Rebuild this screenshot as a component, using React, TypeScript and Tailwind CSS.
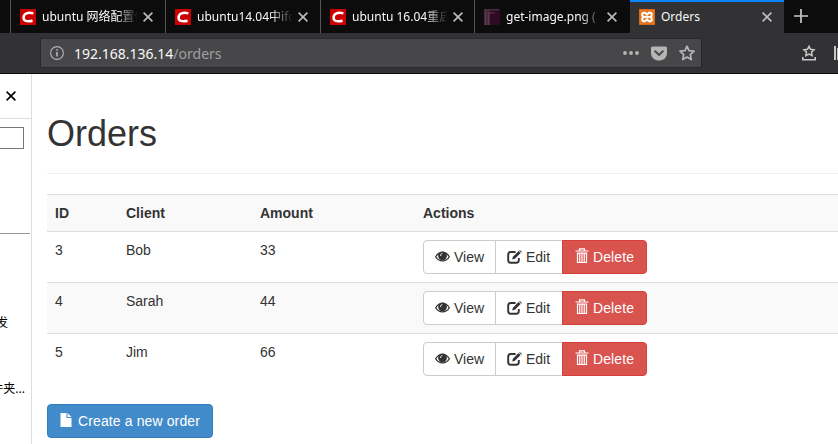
import type { ReactNode } from "react";

const uiFont = "font-['Noto_Sans','Noto_Sans_CJK_SC',sans-serif]";

function CloseIcon({ className = "text-[#bdbdbe]" }: { className?: string }) {
  return (
    <svg className={`h-[10px] w-[10px] shrink-0 ${className}`} viewBox="0 0 10 10" fill="none" stroke="currentColor" strokeWidth="1.6">
      <path d="M.6.6l8.8 8.8M9.4.6L.6 9.4" />
    </svg>
  );
}

function CsdnIcon() {
  return (
    <svg className="h-4 w-4 shrink-0" viewBox="0 0 16 16">
      <rect width="16" height="16" fill="#cb0000" />
      <path d="M13.4 4.4C7.800 3 3.900 4.500 3.600 8.300c-.3 3.500 3.200 4.700 9 3.400" fill="none" stroke="#fff" strokeWidth="2.500" />
    </svg>
  );
}

function ThumbIcon() {
  return (
    <svg className="h-4 w-4 shrink-0" viewBox="0 0 16 16">
      <rect width="16" height="16" fill="#300924" />
      <path d="M0 0h15v1.500H0z" fill="#46303f" />
      <path d="M0 1h6v15H0z" fill="#4b2740" />
      <path d="M1.500 3v13M4.500 3v13M6 4h5" stroke="#5c3a50" />
    </svg>
  );
}

function XamppIcon() {
  return (
    <svg className="h-4 w-4 shrink-0" viewBox="0 0 16 16">
      <rect width="16" height="16" rx="1.2" fill="#e87722" />
      <rect x=".5" y=".5" width="15" height="15" rx="1" fill="none" stroke="#d96a16" />
      <path d="M5 3.800h1L8 5.600l2-1.800h1c2.400 0 2.400 3.200.3 4.200 2.100 1 2.100 4.200-.3 4.200h-1L8 10.400l-2 1.800H5C2.600 12.200 2.600 9 4.700 8 2.600 7 2.600 3.800 5 3.800z" fill="none" stroke="#fff" strokeWidth="2" />
      <path d="M5.500 8h5" stroke="#fff" strokeWidth="1.900" />
    </svg>
  );
}

function Tab({ icon, title, width = "w-[155px]" }: { icon: ReactNode; title: string; width?: string }) {
  return (
    <div className={`flex h-[33px] shrink-0 items-center border-l border-[#555557] pl-[9px] ${width}`}>
      {icon}
      <span className="ml-[6px] w-[95px] shrink-0 overflow-hidden whitespace-nowrap text-[12px] leading-5 text-[#f9f9fa] [mask-image:linear-gradient(to_right,black_74px,transparent_96px)]">
        {title}
      </span>
      <span className="ml-[6px] flex">
        <CloseIcon />
      </span>
    </div>
  );
}

function EyeIcon() {
  return (
    <svg className="h-[14px] w-[15px] shrink-0" viewBox="0 0 15 14">
      <path d="M.7 6.800C3.800 1 11.200 1 14.300 6.800 11.200 12.300 3.800 12.300.7 6.800z" fill="none" stroke="currentColor" strokeWidth="1.300" />
      <circle cx="7.500" cy="5.800" r="4.400" fill="currentColor" />
      <path d="M5.700 6c-.3-1.300.4-2.300 1.600-2.500" fill="none" stroke="#fff" strokeWidth="1" />
    </svg>
  );
}

function EditIcon() {
  return (
    <svg className="h-[14px] w-[15px] shrink-0" viewBox="0 0 15 14">
      <path d="M8.600 2H3.800Q1.200 2 1.200 4.600v5.600q0 2.500 2.600 2.500h5.400q2.600 0 2.600-2.500V8" fill="none" stroke="currentColor" strokeWidth="1.900" />
      <path d="M5.200 9.600l.7-2.800 5.600-5.700 2.100 2-5.700 5.700z" fill="currentColor" />
      <path d="M12.200.5l.7-.5 2 2-.6.700z" fill="currentColor" />
    </svg>
  );
}

function TrashIcon() {
  return (
    <svg className="h-[16px] w-[14px] shrink-0" viewBox="0 0 14 16" fill="none" stroke="currentColor">
      <path d="M.5 3h13M4.500 2.500V.9h5v1.600" strokeWidth="1.200" />
      <path d="M1.900 5.100h10.200M2.500 5v9.500h9V5M4.750 5v9M7 5v9M9.250 5v9" strokeWidth="1.200" />
    </svg>
  );
}

function FileIcon() {
  return (
    <svg className="h-[14px] w-[12px] shrink-0" viewBox="0 0 12 14" fill="currentColor">
      <path d="M.5 0h6v5h5v9H.5zM7.500 0l4 4h-4z" />
    </svg>
  );
}

function Actions() {
  return (
    <div className="flex h-[34px] w-[224px] leading-5">
      <button className="flex w-[73px] items-center gap-[4px] rounded-l border border-[#ccc] bg-white pl-[11px] text-[#333]">
        <EyeIcon />
        View
      </button>
      <button className="-ml-px flex w-[68px] items-center gap-[4px] border border-[#ccc] bg-white pl-[11px] text-[#333]">
        <EditIcon />
        Edit
      </button>
      <button className="-ml-px flex w-[85px] items-center gap-[4px] rounded-r border border-[#d43f3a] bg-[#d9534f] pl-[12px] tracking-[0.1px] text-white">
        <span className="-mt-[2px]">
          <TrashIcon />
        </span>
        Delete
      </button>
    </div>
  );
}

const orders = [
  { id: 3, client: "Bob", amount: 33 },
  { id: 4, client: "Sarah", amount: 44 },
  { id: 5, client: "Jim", amount: 66 },
];

function BrowserChrome() {
  return (
    <header className={`h-[74px] border-b border-[#0c0c0d] bg-[#323234] ${uiFont}`}>
      <div className="flex h-[33px] bg-[#0c0c0d] pl-[10px]">
        <Tab icon={<CsdnIcon />} title="ubuntu 网络配置信" />
        <Tab icon={<CsdnIcon />} title="ubuntu14.04中ifc" />
        <Tab icon={<CsdnIcon />} title="ubuntu 16.04重启" width="w-[154px]" />
        <Tab icon={<ThumbIcon />} title="get-image.png (" width="w-[156px]" />
        <div className="flex w-[154px] shrink-0 items-center border-t-2 border-[#0a84ff] bg-[#323234] pb-[2px] pl-[9px]">
          <XamppIcon />
          <span className="ml-[6px] w-[101px] text-[12px] text-[#f9f9fa]">Orders</span>
          <CloseIcon />
        </div>
        <svg className="ml-[10px] mt-[9px] h-[14px] w-[14px]" viewBox="0 0 14 14" stroke="#c8c8c9" strokeWidth="1.700">
          <path d="M7 0v14M0 7h14" />
        </svg>
      </div>
      <div className="flex h-10 items-center pl-[40px]">
        <div className="flex h-[30px] w-[662px] items-center border border-[#29292b] bg-[#474749] pl-[9px] text-[#b5b5b6]">
          <svg className="h-[14px] w-[14px]" viewBox="0 0 14 14" fill="none" stroke="currentColor">
            <circle cx="7" cy="7" r="6.400" strokeWidth="1.100" />
            <path d="M7 6v4.500M7 3.200v1.500" strokeWidth="1.600" />
          </svg>
          <span className="ml-[10px] mt-px grow text-[14px] leading-5 text-[#f9f9fa]">
            192.168.136.14<span className="text-[#a0a0a1]">/orders</span>
          </span>
          <svg className="h-[4px] w-[16px]" viewBox="0 0 16 4" fill="currentColor">
            <circle cx="2" cy="2" r="1.900" />
            <circle cx="8" cy="2" r="1.900" />
            <circle cx="14" cy="2" r="1.900" />
          </svg>
          <svg className="ml-[12px] h-[15px] w-[16px]" viewBox="0 0 16 15">
            <path d="M1.500.5h13q1.500 0 1.500 1.500v5c0 10-16 10-16 0V2Q0 .5 1.500.5z" fill="currentColor" />
            <path d="M4.200 5.200L8 8.900l3.800-3.700" fill="none" stroke="#474749" strokeWidth="2" strokeLinecap="round" />
          </svg>
          <svg className="ml-[12px] mr-[6px] h-[16px] w-[16px]" viewBox="0 0 16 16" fill="none" stroke="currentColor" strokeWidth="1.700" strokeLinejoin="round">
            <path d="M8 1.200l2 4.500 5 .5-3.700 3.400 1 5L8 12l-4.300 2.600 1-5L1 6.200l5-.5z" />
          </svg>
        </div>
        <svg className="ml-[100px] h-[16px] w-[14px] shrink-0" viewBox="0 0 14 16" fill="none" stroke="#c8c8c9" strokeWidth="1.500">
          <path d="M7 1.300l1.500 3 3.500.4-2.500 2.400.6 3.500L7 9l-3.100 1.600.6-3.500L2 4.700l3.500-.4z" />
          <path d="M.8 12v2.800h12.400V12" strokeWidth="1.600" />
        </svg>
        <svg className="ml-[18px] h-[14px] w-[4px] shrink-0" viewBox="0 0 4 14" fill="#c8c8c9">
          <path d="M0 0h2v14H0zM3 2h1v12H3z" />
        </svg>
      </div>
    </header>
  );
}

function Sidebar() {
  return (
    <aside className={`flex w-[32px] shrink-0 flex-col overflow-hidden border-r border-[#dedede] text-[12px] text-black ${uiFont}`}>
      <div className="flex h-[45px] shrink-0 items-center border-b border-[#dedede] pl-[6px]">
        <CloseIcon className="text-black" />
      </div>
      <div className="mt-2 h-[22px] w-[24px] shrink-0 border border-l-0 border-[#777]" />
      <div className="mt-[84px] h-px w-[30px] shrink-0 bg-[#999]" />
      <div className="mt-[79px] flex h-5 w-[8px] shrink-0 items-center justify-end whitespace-nowrap">发</div>
      <div className="mt-[46px] flex h-5 w-[25px] shrink-0 items-center justify-end whitespace-nowrap">件夹...</div>
    </aside>
  );
}

export default function App() {
  return (
    <div className="flex h-[444px] w-[838px] flex-col overflow-hidden bg-white">
      <BrowserChrome />
      <div className="flex min-h-0 grow">
        <Sidebar />
        <main className="grow pl-[15px] font-['Liberation_Sans',Arial,sans-serif] text-[14px] leading-5 text-[#333]">
          <h1 className="mt-[40px] text-[36px] leading-[39px]">Orders</h1>
          <hr className="mt-[20px] border-[#eee]" />
          <table className="mt-[20px] w-full table-fixed border-collapse text-left">
            <colgroup>
              <col className="w-[71px]" />
              <col className="w-[134px]" />
              <col className="w-[163px]" />
              <col />
            </colgroup>
            <thead>
              <tr className="h-[37px] border-t border-[#ddd] bg-[#f9f9f9]">
                <th className="px-2">ID</th>
                <th className="px-2">Client</th>
                <th className="px-2">Amount</th>
                <th className="px-2">Actions</th>
              </tr>
            </thead>
            <tbody>
              {orders.map((order) => (
                <tr key={order.id} className="h-[51px] border-t border-[#ddd] align-top even:bg-[#f9f9f9]">
                  <td className="px-2 pt-2">{order.id}</td>
                  <td className="px-2 pt-2">{order.client}</td>
                  <td className="px-2 pt-2">{order.amount}</td>
                  <td className="px-2 pt-2">
                    <Actions />
                  </td>
                </tr>
              ))}
            </tbody>
          </table>
          <button className="mt-[19px] flex h-[34px] w-[166px] items-center gap-[6px] rounded border border-[#357ebd] bg-[#428bca] pl-[12px] text-white">
            <span className="-mt-[2px]">
              <FileIcon />
            </span>
            <span className="whitespace-nowrap tracking-[0.12px]">Create a new order</span>
          </button>
        </main>
      </div>
    </div>
  );
}
